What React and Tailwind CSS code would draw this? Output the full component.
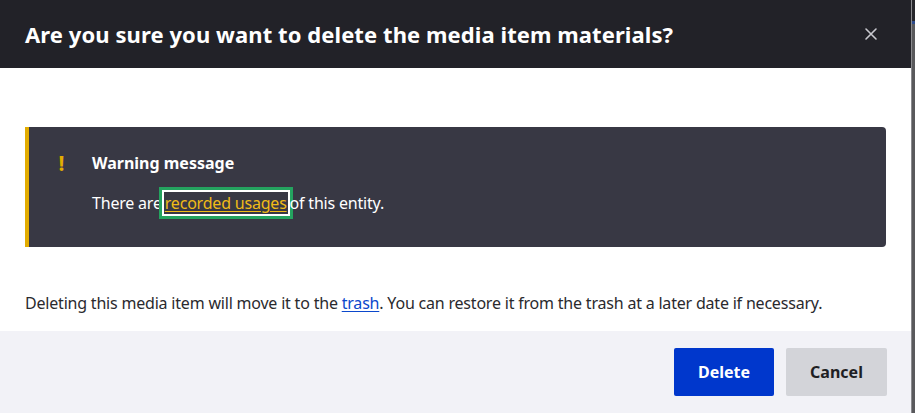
export default function App() {
  return (
    <div className="w-[915px] h-[413px] overflow-hidden flex bg-[#59595c]" style={{ fontFamily: '"Noto Sans", "Open Sans", sans-serif' }}>
      <div className="w-[912px] h-[420px] shrink-0 flex flex-col bg-white border-r border-[#8a8a8e] rounded-br-md overflow-hidden">
        <div className="h-[68px] shrink-0 bg-[#222228] flex items-center justify-between pl-[25px] pr-[33px]">
          <h1 className="text-white font-bold text-[22px] leading-none tracking-[0.08px]">Are you sure you want to delete the media item materials?</h1>
          <svg width="14" height="14" viewBox="0 0 14 14" className="text-[#c9c9cf]">
            <path d="M2 2 L12 12 M12 2 L2 12" stroke="currentColor" strokeWidth="1.6" strokeLinecap="round" />
          </svg>
        </div>
        <div className="bg-white pt-[59px] px-[25px] h-[263px] shrink-0">
          <div className="h-[120px] bg-[#383844] border-l-4 border-[#e2ac00] rounded-r-sm flex pt-[22px]">
            <div className="w-[63px] flex justify-center text-[#e2ac00] font-bold text-[21px] leading-[28px] pl-[2px]">!</div>
            <div className="flex flex-col">
              <div className="text-white font-bold text-[16px] leading-[28px]">Warning message</div>
              <div className="text-white text-[16px] leading-[24px] mt-[14px] tracking-[-0.2px]">
                There are{" "}
                <a href="#" className="inline-block text-[#f0bb17] underline underline-offset-2 leading-[22px] px-[1px] -mx-[2px] shadow-[0_0_0_2px_#ffffff,0_0_0_5px_#24a35f]">recorded usages</a>{" "}
                of this entity.
              </div>
            </div>
          </div>
          <p className="mt-[44px] text-[16px] leading-[24px] text-[#2a2a2e] tracking-[-0.2px]">
            Deleting this media item will move it to the{" "}
            <a href="#" className="text-[#0b48cc] underline underline-offset-2">trash</a>. You can restore it from the trash at a later date if necessary.
          </p>
        </div>
        <div className="flex-1 bg-[#f2f2f7] flex justify-end items-start pt-[17px] pr-[24px] gap-[12px]">
          <button className="w-[100px] h-[48px] bg-[#0037cc] text-white font-bold text-[16px] rounded-[2px]">Delete</button>
          <button className="w-[101px] h-[48px] bg-[#d3d4d9] text-[#1f1f24] font-bold text-[16px] rounded-[2px]">Cancel</button>
        </div>
      </div>
      <div className="flex-1 flex flex-col">
        <div className="h-[21px] bg-[#26262b]" />
        <div className="h-[3px] bg-[#2c4a8a]" />
        <div className="flex-1 bg-[#59595c]" />
      </div>
    </div>
  );
}
